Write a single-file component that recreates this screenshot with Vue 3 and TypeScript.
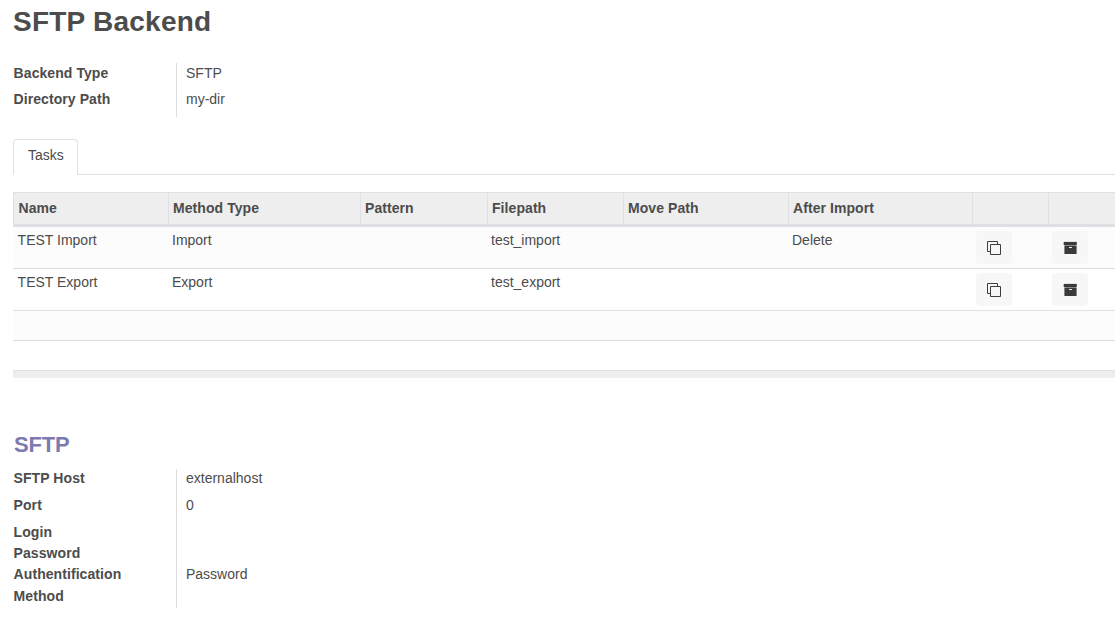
<script setup lang="ts">
interface Task {
  name: string
  method: string
  pattern: string
  filepath: string
  movePath: string
  afterImport: string
}

interface Field {
  label: string
  value: string
  height: number
}

const general: Field[] = [
  { label: 'Backend Type', value: 'SFTP', height: 26 },
  { label: 'Directory Path', value: 'my-dir', height: 28 },
]

const connection: Field[] = [
  { label: 'SFTP Host', value: 'externalhost', height: 27 },
  { label: 'Port', value: '0', height: 27 },
  { label: 'Login', value: '', height: 21 },
  { label: 'Password', value: '', height: 21 },
  { label: 'Authentification Method', value: 'Password', height: 43 },
]

const tasks: Task[] = [
  { name: 'TEST Import', method: 'Import', pattern: '', filepath: 'test_import', movePath: '', afterImport: 'Delete' },
  { name: 'TEST Export', method: 'Export', pattern: '', filepath: 'test_export', movePath: '', afterImport: '' },
]

const columns: string[] = ['Name', 'Method Type', 'Pattern', 'Filepath', 'Move Path', 'After Import', '', '']
</script>

<template>
  <main class="sheet">
    <h1>SFTP Backend</h1>

    <dl class="group general">
      <div v-for="f in general" :key="f.label" class="field" :style="{ height: f.height + 'px' }">
        <dt>{{ f.label }}</dt>
        <dd>{{ f.value }}</dd>
      </div>
    </dl>

    <nav class="tabs"><span class="tab">Tasks</span></nav>

    <table class="tasks">
      <colgroup>
        <col class="c-name" /><col class="c-method" /><col class="c-pattern" /><col class="c-file" />
        <col class="c-move" /><col class="c-after" /><col class="c-copy" /><col />
      </colgroup>
      <thead>
        <tr>
          <th v-for="(c, i) in columns" :key="i">{{ c }}</th>
        </tr>
      </thead>
      <tbody>
        <tr v-for="t in tasks" :key="t.name" class="row">
          <td>{{ t.name }}</td>
          <td>{{ t.method }}</td>
          <td>{{ t.pattern }}</td>
          <td>{{ t.filepath }}</td>
          <td>{{ t.movePath }}</td>
          <td>{{ t.afterImport }}</td>
          <td>
            <button type="button" aria-label="Duplicate">
              <svg width="16" height="16" viewBox="0 0 16 16" fill="none" stroke="#3c3c42">
                <path d="M4 11.5H1.5V1.5H11.5V4" />
                <path d="M4.5 4.5H14.5V14.5H4.5Z" />
              </svg>
            </button>
          </td>
          <td>
            <button type="button" aria-label="Archive">
              <svg width="16" height="16" viewBox="0 0 16 16">
                <path fill="#3a3a3a" d="M1.7 1.9H14.8V5H1.7Z" />
                <path fill="#8a8a8a" d="M2.4 5H14.4V6H2.4Z" />
                <path fill="#3a3a3a" d="M2.4 6H14.6V14H2.4Z" />
                <path fill="#e8e8e8" d="M7 7H10V8H7Z" />
              </svg>
            </button>
          </td>
        </tr>
        <tr v-for="n in 2" :key="n" class="blank"><td colspan="8"></td></tr>
      </tbody>
      <tfoot>
        <tr><td colspan="8"></td></tr>
      </tfoot>
    </table>

    <h2>SFTP</h2>
    <dl class="group connection">
      <div v-for="f in connection" :key="f.label" class="field" :style="{ height: f.height + 'px' }">
        <dt>{{ f.label }}</dt>
        <dd>{{ f.value }}</dd>
      </div>
    </dl>
  </main>
</template>

<style>
body {
  margin: 0;
  background: #fff;
}
</style>

<style scoped>
.sheet {
  box-sizing: border-box;
  height: 626px;
  padding-left: 13px;
  overflow: hidden;
  color: #4c4c4c;
  font: 14px/21px "Liberation Sans", Arial, sans-serif;
}
h1 {
  margin: 0;
  padding-top: 5px;
  height: 58px;
  box-sizing: border-box;
  font-size: 28px;
  line-height: 34px;
  letter-spacing: 0.24px;
}
.group {
  margin: 0;
}
.field {
  display: flex;
}
dt {
  box-sizing: border-box;
  width: 163px;
  padding-left: 0.6px;
  padding-right: 40px;
  font-weight: bold;
  letter-spacing: 0.07px;
}
dd {
  flex: 1;
  margin: 0;
  padding-left: 9px;
  border-left: 1px solid #ddd;
}
.general {
  padding-top: 5px;
  height: 76px;
  box-sizing: border-box;
}
.connection dt,
.connection dd {
  line-height: 19px;
}
.connection .field:last-child dt {
  margin-top: -2.5px;
  line-height: 22px;
}
.tabs {
  display: flex;
  height: 36px;
  margin-top: 5px;
  box-sizing: border-box;
  border-bottom: 1px solid #dee2e6;
}
.tab {
  box-sizing: border-box;
  height: 36px;
  width: 65px;
  padding: 5px 0 0 14px;
  border: 1px solid #dee2e6;
  border-bottom-color: #fff;
  border-radius: 4px 4px 0 0;
  background: #fff;
}
.tasks {
  width: 1102px;
  margin-top: 17px;
  table-layout: fixed;
  border-collapse: separate;
  border-spacing: 0;
}
.c-name { width: 155px; }
.c-method { width: 192px; }
.c-pattern { width: 127px; }
.c-file { width: 136px; }
.c-move { width: 165px; }
.c-after { width: 184px; }
.c-copy { width: 76px; }
th {
  box-sizing: border-box;
  height: 35px;
  padding: 0 4px;
  border: solid #dee0e3;
  border-width: 1px 0 3px 1px;
  background: #eee;
  text-align: left;
  letter-spacing: 0.07px;
}
th:first-child {
  padding-left: 4.5px;
}
td {
  box-sizing: border-box;
  padding: 0;
  border-bottom: 1px solid #dee0e3;
  vertical-align: top;
}
.row td {
  height: 42px;
  padding: 3px 4px 0;
}
.row td:first-child {
  padding-left: 4.6px;
}
.blank td {
  height: 30px;
}
tbody tr:nth-child(odd) {
  background: #fcfcfc;
}
tfoot td {
  height: 7px;
  border: 0;
  background: #eee;
}
button {
  display: flex;
  align-items: center;
  justify-content: center;
  width: 36px;
  height: 33px;
  margin-top: 1px;
  padding: 0;
  border: 0;
  border-radius: 4px;
  background: #f7f7f7;
}
button svg {
  margin-top: 1px;
}
h2 {
  margin: 0;
  padding: 53px 0 0 1px;
  height: 91px;
  box-sizing: border-box;
  color: #7c7bad;
  font-size: 22px;
  line-height: 28px;
  letter-spacing: -0.2px;
}
</style>
